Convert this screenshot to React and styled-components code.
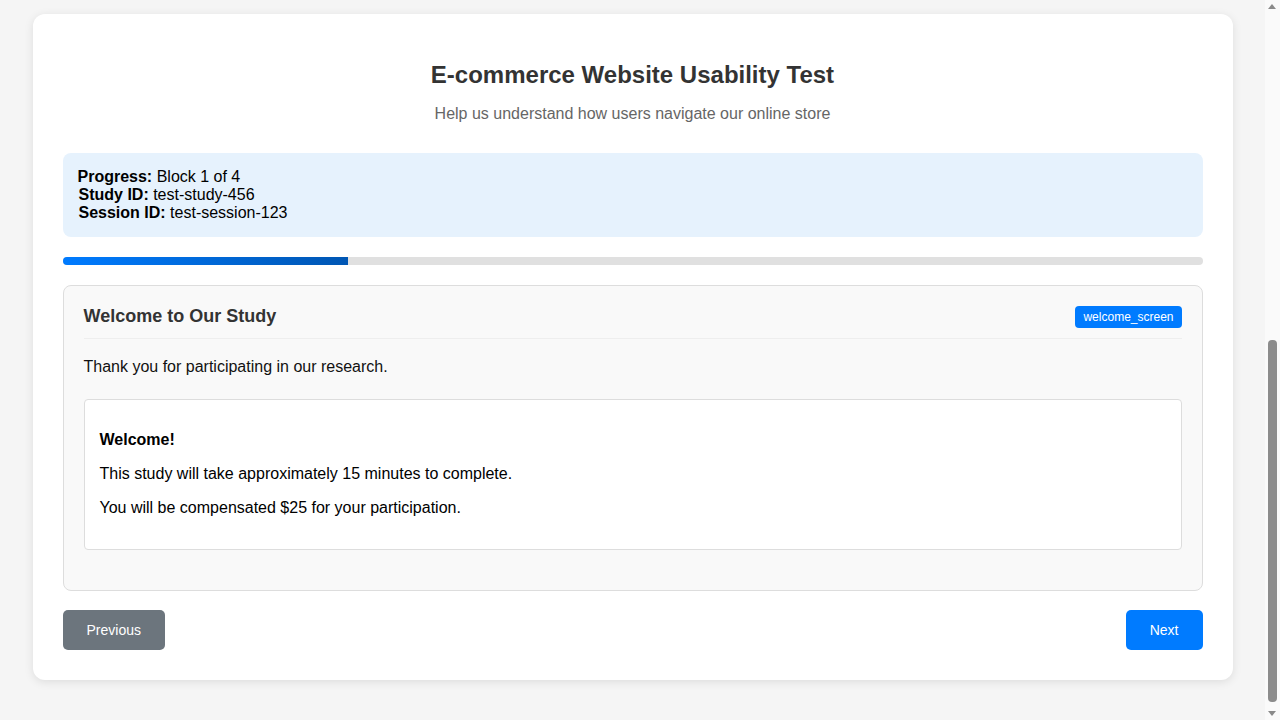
import styled, { createGlobalStyle } from "styled-components";

const GlobalStyle = createGlobalStyle`
  body {
    margin: 0;
    background: #f5f5f5;
    font-family: "Liberation Sans", Arial, sans-serif;
  }
`;

// the page sits beside a 15px scroll gutter
const Page = styled.div`
  padding: 14px 35px 40px 20px;
`;

const ScrollTrack = styled.div`
  position: fixed;
  top: 0;
  right: 0;
  width: 15px;
  height: 100vh;
  background: #fafafa;
`;

const Arrow = styled.div`
  position: absolute;
  left: 3px;
  ${(p) => (p.$down ? "bottom: 4px;" : "top: 4px;")}
  width: 0;
  height: 0;
  border-left: 4.5px solid transparent;
  border-right: 4.5px solid transparent;
  ${(p) => (p.$down ? "border-top" : "border-bottom")}: 5px solid #8a8a8a;
`;

const Thumb = styled.div`
  position: absolute;
  left: 3px;
  top: 340px;
  width: 9px;
  height: 362px;
  background: #8c8c8c;
  border-radius: 4px;
`;

const Card = styled.div`
  max-width: 1200px;
  box-sizing: border-box;
  margin: 0 auto;
  background: white;
  border-radius: 12px;
  box-shadow: 0 2px 10px rgba(0, 0, 0, 0.1);
  padding: 30px;
`;

const Header = styled.div`
  text-align: center;
  padding-top: 17px;
  margin-bottom: 30px;
`;

const Title = styled.h1`
  margin: 0 0 16px;
  font-size: 24px;
  line-height: 28px;
  color: #333;
`;

const Subtitle = styled.p`
  margin: 0;
  font-size: 16px;
  line-height: 18px;
  color: #666;
`;

const InfoBox = styled.div`
  background: #e6f2fd;
  border-radius: 8px;
  padding: 15px;
  font-size: 16px;
  line-height: 18px;
  color: #000;
  margin-bottom: 20px;
`;

const InfoLine = styled.div`
  padding-left: ${(p) => (p.$first ? 0 : 1)}px;
`;

const Track = styled.div`
  height: 8px;
  background: #e0e0e0;
  border-radius: 4px;
  overflow: hidden;
  margin-bottom: 20px;
`;

const Fill = styled.div`
  height: 100%;
  background: linear-gradient(90deg, #007bff, #0056b3);
`;

const Block = styled.div`
  background: #f9f9f9;
  border: 1px solid #ddd;
  border-radius: 8px;
  padding: 20px;
  margin-bottom: 19px;
`;

const BlockHeader = styled.div`
  display: flex;
  justify-content: space-between;
  align-items: center;
  height: 22px;
  padding-bottom: 10px;
  border-bottom: 1px solid #eee;
  margin-bottom: 19px;
`;

const BlockTitle = styled.h3`
  margin: 0 0 1px;
  font-size: 18px;
  line-height: 21px;
  color: #333;
`;

const Badge = styled.span`
  background: #007bff;
  color: white;
  font-size: 12px;
  line-height: 14px;
  padding: 4px 8px;
  border-radius: 4px;
`;

const Text = styled.p`
  margin: 0 0 23px;
  font-size: 16px;
  line-height: 18px;
  color: #111;
`;

const Content = styled.div`
  background: white;
  border: 1px solid #ddd;
  border-radius: 4px;
  padding: 15px;
  margin-bottom: 20px;
`;

const Para = styled.p`
  margin: 16px 0 17px;
  font-size: 16px;
  line-height: 18px;
  color: #000;
  font-weight: ${(p) => (p.$bold ? "bold" : "normal")};
  & + & {
    margin-top: -1px;
  }
`;

const Nav = styled.div`
  display: flex;
  justify-content: space-between;
`;

const Button = styled.button`
  font-family: inherit;
  font-size: 14px;
  line-height: 16px;
  padding: 12px 24px;
  border: none;
  border-radius: 5px;
  color: white;
  background: ${(p) => (p.$primary ? "#007bff" : "#6c757d")};
  cursor: pointer;
`;

const App = () => (
  <Page>
    <GlobalStyle />
    <Card>
      <Header>
        <Title>E-commerce Website Usability Test</Title>
        <Subtitle>Help us understand how users navigate our online store</Subtitle>
      </Header>
      <InfoBox>
        <InfoLine $first>
          <strong>Progress:</strong> Block 1 of 4
        </InfoLine>
        <InfoLine>
          <strong>Study ID:</strong> test-study-456
        </InfoLine>
        <InfoLine>
          <strong>Session ID:</strong> test-session-123
        </InfoLine>
      </InfoBox>
      <Track>
        <Fill style={{ width: `${(1 / 4) * 100}%` }} />
      </Track>
      <Block>
        <BlockHeader>
          <BlockTitle>Welcome to Our Study</BlockTitle>
          <Badge>welcome_screen</Badge>
        </BlockHeader>
        <Text>Thank you for participating in our research.</Text>
        <Content>
          <Para $bold>Welcome!</Para>
          <Para>This study will take approximately 15 minutes to complete.</Para>
          <Para>You will be compensated $25 for your participation.</Para>
        </Content>
      </Block>
      <Nav>
        <Button>Previous</Button>
        <Button $primary>Next</Button>
      </Nav>
    </Card>
    <ScrollTrack>
      <Arrow />
      <Thumb />
      <Arrow $down />
    </ScrollTrack>
  </Page>
);

export default App;
